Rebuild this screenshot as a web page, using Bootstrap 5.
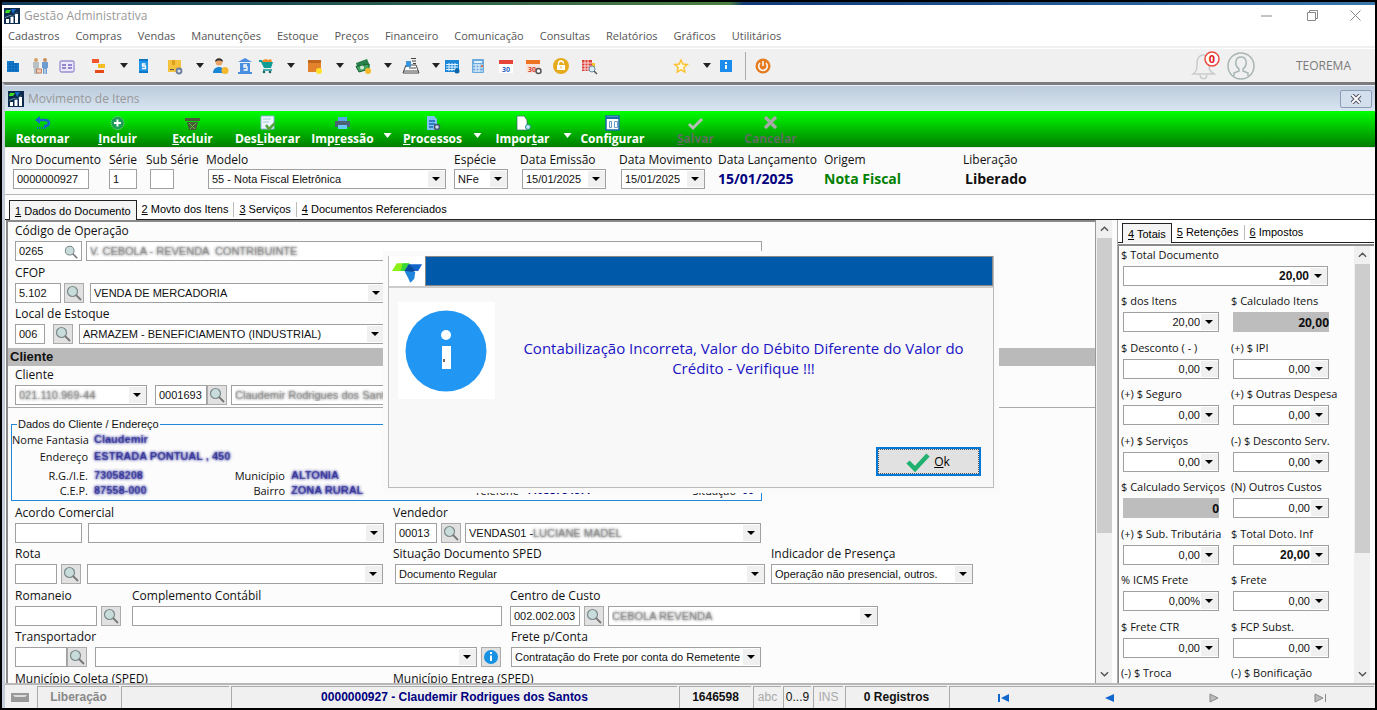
<!DOCTYPE html>
<html lang="pt-BR">
<head>
<meta charset="utf-8">
<meta name="viewport" content="width=device-width, initial-scale=1">
<title>Gestão Administrativa</title>
<link href="https://cdn.jsdelivr.net/npm/bootstrap@5.3.0/dist/css/bootstrap.min.css" rel="stylesheet">
<style>
:root{--ui:"Open Sans","Noto Sans",sans-serif;--fx:"Liberation Sans",Arial,sans-serif}
body{font:12px/16px var(--ui);color:#111;background:#000;padding:2px;height:100vh;overflow:hidden;display:flex;flex-direction:column}
button{font:inherit;border:0;background:none;padding:0}
svg{display:block}
.wall{height:3px;background:linear-gradient(90deg,#123a5c 0,#1f4f55 20%,#4c8040 53%,#123a78 54%,#3a78ac 100%)}
.titlebar{height:21px;background:#fff;color:#999}
.wbtn{width:46px;display:flex;justify-content:center;align-items:center}
.wbtn:last-child{width:40px}
.menubar{height:22px;background:#fff;border-bottom:2px solid #f0f0f0;padding:0 6px;gap:16px;font-size:11px}
.menubar a{color:#555;text-decoration:none}
.tools{height:34px;background:#f0f0f0;border-top:1px solid #fff}
.toolgrid{display:grid;grid-template-columns:27px 27px 32px 30px 14px 31px 31px 15px 25px 21px 30px 18px 31px 18px 30px 18px 30px 11px 26px 28px 27px 28px 28px 92px 31px 14px 28px 9px 18px;align-items:center;padding-left:2px}
.toolgrid svg{width:18px;height:18px}
.caret{width:8px;height:5px;background:#222;clip-path:polygon(0 0,100% 0,50% 100%)}
.caret.light{background:#fff}
.vsep{width:1px;height:28px;background:#aaa}
.teo{margin-left:41px;color:#7a7a7a}
.child{flex:1;min-height:0;display:flex;flex-direction:column;border-top:3px solid #7c7c7c;border-left:3px solid #c3ccd8;background:#fcfcfc}
.childbar{height:26px;background:linear-gradient(#bccbdb,#d8e5f2);color:#999;border-top:1px solid #eef;padding:0 3px 0 3px}
.xbtn{width:32px;height:18px;border:1px solid #8c9bb8;border-radius:2px;background:#d3dfec}
.green{height:36px;background:linear-gradient(#00ff00,#007c00);color:#fff;font-weight:700}
.green button:not(.drop){width:75px;color:#fff;font-weight:700;display:flex;flex-direction:column;align-items:center;padding-top:4px}
.green button svg{width:17px;height:16px}
.green .drop{width:15px;display:flex;justify-content:center;padding-top:22px}
.green button.off:not(.drop){color:#5d6f5d}
.head{height:48px;border-top:1px solid #e8e8e8;border-bottom:1px solid #b8b8b8;padding:2px 0 0 6px;background:#fbfbfb}
.head label,.head .cap{height:19px;line-height:19px;display:block;white-space:nowrap}
.head .big{font-weight:700;font-size:14px;line-height:20px;white-space:nowrap}
.navy{color:#000080}.grass{color:#008000}
.fx,.sx{height:20px;border:1px solid #a0a0a0;border-radius:0;background:#fff;font:11px/16px var(--fx);color:#111;padding:0 3px;min-width:0;flex:none;outline-offset:0}
.sx{appearance:none;background:#fff url("data:image/svg+xml,%3Csvg xmlns='http://www.w3.org/2000/svg' width='17' height='16'%3E%3Cpath fill='%23f0f0f0' d='M0 0h17v16H0z'/%3E%3Cpath d='M4 6h8l-4 4z'/%3E%3C/svg%3E") no-repeat right 0 center;padding-right:18px}
.num{text-align:right}
.num.strong{font-weight:700;font-size:12px}
.calc{background:#bdbdbd;border:0;text-align:right;font:700 12px/16px var(--ui);padding:0}
.veil{color:#7776;text-shadow:0 0 3px #444}
.tabs{background:#fff;border-bottom:1px solid #222;font:11px/18px var(--fx);height:21px;align-items:end}
.tabs button{height:20px;padding:0 5px;white-space:nowrap;line-height:20px}
.tabs button.on{border:1px solid #222;border-bottom:0;background:#f4f4f4;height:20px;margin-bottom:-1px;line-height:20px}
.tabs button+button:not(.on)+button{border-left:1px solid #bbb;height:15px;line-height:15px;margin-bottom:2px}
.work{flex:1;min-height:0;display:flex;overflow:hidden}
.formpane{flex:1;min-width:0;border-top:2px solid #8a8a8a;border-left:2px solid #8a8a8a;border-right:1px solid #999;overflow:hidden;margin:0 0 0 1px}
.frow{height:41px;display:flex;padding-left:7px}
.frow.tall{height:42px}
.frow label{display:block;height:19px;line-height:18px;white-space:nowrap}
.frow .grp{flex:none}
.lens{width:20px;height:20px;border:1px solid #ababab;background:#e1e1e1;display:flex;align-items:center;justify-content:center;flex:none}
.section{height:18px;background:#bababa;font:700 13px/17px var(--fx);margin-top:1px;padding-left:2px}
.rule{border-top:1px solid #aaa;margin:0}
fieldset.client{border:1px solid #2487d6;width:751px;height:77px;margin:16px 0 3px 3px;position:relative;padding-top:7px;font:11px/15px var(--ui)}
fieldset.client legend{position:absolute;top:-9px;left:5px;width:auto;background:#fcfcfc;font:11px/17px var(--fx);margin:0;float:none;padding:0 1px}
.cgrid{display:grid;grid-template-columns:76px 132px 53px 176px 46px 158px 47px 1fr;column-gap:6px;grid-template-rows:17px 19px 15px 15px;white-space:nowrap}
.cgrid dt{font-weight:400;text-align:right}
.cgrid dd{margin:0;color:#000080;font:700 11px/15px var(--fx)}
.cgrid .veil{color:#00008077;text-shadow:0 0 3px #000080}
.veiled-over{left:68px;top:2px;font:11px/16px var(--fx)}
.sbar{width:16px;background:#f0f0f0;display:flex;flex-direction:column;align-items:center;flex:none}
.sbar .thumb{width:15px;height:69%;background:#cdcdcd}
.sbar .thumb.short{height:72%}
.sbar button{height:18px;width:16px;display:flex;align-items:center;justify-content:center}
.side{width:257px;flex:none;border-left:1px solid #aaa;display:flex;flex-direction:column;background:#fff;margin:0 1px 0 5px}
.side .tabs{margin-top:2px}
.side .inner{flex:1;min-height:0;display:flex;border-top:2px solid #8a8a8a;border-left:1px solid #8a8a8a;margin-top:1px;background:#fcfcfc}
.trow{display:grid;grid-template-columns:110px 110px;height:46px}
.trow:nth-child(even){height:47px}
.trow>div{overflow:hidden;padding-left:3px}
.trow label{display:block;white-space:nowrap;height:20px;line-height:18px;margin-left:-1px;font-size:11px}
.trow input{width:96px;margin-left:1px;display:block}
.trow .wide{width:205px}
.status{height:25px;background:#f0f0f0;border-top:2px solid #b8b8b8;display:flex;padding:1px 1px 0 0;gap:2px;font:700 12px/21px var(--fx)}
.status>div,.status>nav{border-left:1px solid #aaa;border-top:1px solid #aaa;text-align:center;white-space:nowrap;overflow:hidden;flex:none}
.status>.who{flex:1 1 22px;color:#000080}
.status>nav{flex:1 1 0}
.status .mute{color:#888}
.thin{font-weight:400}
.faint{color:#aaa}
.w28{width:28px}.w30{width:30px}.w24{width:24px}.w42{width:42px}.w46{width:46px}.w52{width:52px}.w54{width:54px}.w67{width:67px}.w70{width:70px}.w76{width:76px}.w82{width:82px}.w84{width:84px}.w102{width:102px}.w108{width:108px}.w132{width:132px}.w202{width:202px}.w238{width:238px}.w250{width:250px}.w270{width:270px}.w296{width:296px}.w306{width:306px}.w370{width:370px}.w382{width:382px}.w530{width:530px}.w676{width:676px}
.w37{width:37px}.w60{width:60px}.w66{width:66px}.w72{width:72px}.w98{width:98px}.w99{width:99px}.w106{width:106px}.w117{width:117px}.w139{width:139px}.w248{width:248px}.w378{width:378px}.w496{width:496px}
.s2{margin-left:2px}.s3{margin-left:3px}.s4{margin-left:4px}.s6{margin-left:6px}.s8{margin-left:8px}
.dlg{position:absolute;left:50%;top:251px;width:616px;margin-left:-306px;border:5px solid #fafafa;background:#f8f8f8;z-index:5}
.dlg .frame{border:1px solid #bbb;border-top:0;height:232px;display:flex;flex-direction:column}
.dlgtitle{height:32px;border-bottom:2px solid #ccc;background:#fff}
.dlgtitle .blue{background:#005aa9;border:1px solid #8a8a8a}
.dlgicon{width:97px;height:97px;background:#fff;margin:14px 0 0 9px}
.dlgmsg{color:#1a14c4;font-size:15px;line-height:20px;font-weight:500;text-align:center;padding:50px 16px 0}
.okbtn{width:105px;height:29px;background:#e1e1e1;border:2px solid #0078d7;outline:1px dotted #555;outline-offset:-3px;font:12px/16px var(--ui);margin:0 12px 11px auto}
</style>
</head>
<body>
<svg width="0" height="0" class="position-absolute" aria-hidden="true">
<symbol id="lens" viewBox="0 0 16 16"><circle cx="6.500" cy="6.500" r="5" fill="#c9dcdc" stroke="#7d8a8a" stroke-width="1.200"/><path d="M10 10l5 5" stroke="#777" stroke-width="1.800"/></symbol>
<symbol id="logo" viewBox="0 0 16 16"><path fill="#0d2c4d" d="M0 0h16v16H0z"/><path fill="#3ddc25" d="M2 2h5L5 5H1z"/><path fill="#1768c9" d="M7 1h5l-3 5z"/><path fill="#fff" d="M2 11h3v4H2zM6.500 9h3v6h-3zM11 6h3v9h-3z"/><path d="M1 9.500l5-2 3 1 4-4" stroke="#7fa3c4" fill="none" stroke-width=".8"/></symbol>
<symbol id="up" viewBox="0 0 10 6"><path d="M1 5l4-4 4 4" fill="none" stroke="#555" stroke-width="1.600"/></symbol>
<symbol id="down" viewBox="0 0 10 6"><path d="M1 1l4 4 4-4" fill="none" stroke="#555" stroke-width="1.600"/></symbol>
</svg>
<div class="wall"></div>
<header>
<div class="titlebar d-flex align-items-stretch">
<div class="d-flex align-items-center flex-grow-1"><svg class="s2 me-1" width="16" height="16"><use href="#logo"/></svg><span>Gestão Administrativa</span></div>
<button class="wbtn" aria-label="Minimizar"><svg width="11" height="11"><path d="M0 6h11" stroke="#888"/></svg></button>
<button class="wbtn" aria-label="Restaurar"><svg width="11" height="11" fill="none" stroke="#888"><path d="M.5 2.500h8v8h-8zM2.500 2.500v-2h8v8h-2"/></svg></button>
<button class="wbtn" aria-label="Fechar"><svg width="11" height="11"><path d="M.5.500l10 10M10.500.500l-10 10" stroke="#888"/></svg></button>
</div>
<nav class="menubar d-flex align-items-center"><a href="#">Cadastros</a><a href="#">Compras</a><a href="#">Vendas</a><a href="#">Manutenções</a><a href="#">Estoque</a><a href="#">Preços</a><a href="#">Financeiro</a><a href="#">Comunicação</a><a href="#">Consultas</a><a href="#">Relatórios</a><a href="#">Gráficos</a><a href="#">Utilitários</a></nav>
<div class="tools d-flex align-items-center">
<div class="toolgrid">
<button aria-label="Empresa"><svg viewBox="0 0 18 18"><path fill="#1583d8" d="M3 4h7v2h5v9H3z"/><path stroke="#0a5ba5" d="M3 7h12M3 10h12M3 13h12M6 4v11M9 4v11M12 6v9" stroke-width=".8"/></svg></button>
<button aria-label="Parceiros"><svg viewBox="0 0 18 18"><circle cx="5" cy="3" r="2" fill="#d9a066"/><circle cx="14" cy="3" r="2" fill="#c4915c"/><path fill="#b8c2c6" d="M2 5h6v6H7v6H3v-6H2z"/><path fill="#6d9dd0" d="M11 5h6v6h-1v6h-1.500v-5h-1v5H12v-6h-1z"/><path fill="#f0d0b8" stroke="#c07c5c" d="M5.500 12h5v4h-5z"/></svg></button>
<button aria-label="Ficha"><svg viewBox="0 0 18 18"><rect x="2" y="4" width="14" height="11" rx="1.500" fill="#ece8fb" stroke="#9b8fd0" stroke-width="1.300"/><path d="M4 8h4M4 11h4M10 8h4M10 11h4" stroke="#7766bb" stroke-width="1.500"/></svg></button>
<button aria-label="Estrutura"><svg viewBox="0 0 18 18"><path fill="#f2552c" d="M2 2h7v4H2z"/><path fill="#f5bd25" d="M8 7h7v4H8z"/><path fill="#e64a19" d="M5 13h9v3H5z"/></svg></button>
<button class="caret" aria-label="Mais"></button>
<button aria-label="Financeiro"><svg viewBox="0 0 18 18"><path fill="#2196e8" d="M5 2h9v14H5z"/><path fill="#0b77c6" d="M5 2h9v2H5zM5 14h9v2H5z"/><path d="M11.500 7h-3v2h3v2.500h-3.500" fill="none" stroke="#fff" stroke-width="1.300"/></svg></button>
<button aria-label="Produto"><svg viewBox="0 0 18 18"><path fill="#f4c23c" d="M3 3h13v12H3z"/><path fill="#dfa01c" d="M7 3h3v5H7z"/><path fill="#555" d="M5 12h4v1H5z"/><circle cx="14" cy="14" r="2.500" fill="#dbe3ee" stroke="#6b7f9c" stroke-width="1.800"/></svg></button>
<button class="caret" aria-label="Mais"></button>
<button aria-label="Cliente"><svg viewBox="0 0 18 18"><circle cx="8" cy="5" r="3.500" fill="#e8a56a"/><path fill="#333" d="M4 5c0-5 8-5 8 0-2-2-6-2-8 0z"/><path fill="#1c86d6" d="M2 16c0-8 12-8 12 0z"/><circle cx="14" cy="13.500" r="3.500" fill="#f5b82d"/></svg></button>
<button aria-label="Banco"><svg viewBox="0 0 18 18"><path fill="#4a8ee0" d="M9 1l7 4H2zM4 6h10v10H4zM2 15h14v2H2z"/><path d="M11 8H8v2h3v3H7.500" fill="none" stroke="#fff" stroke-width="1.300"/></svg></button>
<button aria-label="Compras"><svg viewBox="0 0 18 18"><path fill="#f48a25" d="M6 3l3-1 2 1 3-1 1 3H5z"/><path fill="#0f9d94" d="M2 3h3l1 2h10l-2 6H7L4 5H2z"/><path d="M6 13h9" stroke="#0f9d94" stroke-width="1.500"/><circle cx="7" cy="15" r="1.300" fill="#23606a"/><circle cx="13" cy="15" r="1.300" fill="#23606a"/></svg></button>
<button class="caret" aria-label="Mais"></button>
<button aria-label="Estoque"><svg viewBox="0 0 18 18"><path fill="#e2832b" d="M3 3h13v12H3z"/><path fill="#c0651a" d="M3 3h13v3H3z"/><circle cx="14" cy="14" r="3" fill="#ffe029"/></svg></button>
<button class="caret" aria-label="Mais"></button>
<button aria-label="Pagamentos"><svg viewBox="0 0 18 18"><path fill="#268049" d="M2 6l11-4 3 7L4 13z"/><path fill="#43a564" stroke="#17602f" d="M2 9.500l13-2.500v5L5 15z"/><circle cx="8" cy="10.500" r="2" fill="#cfe8d6"/><circle cx="14" cy="14" r="3" fill="#f3b928"/></svg></button>
<button class="caret" aria-label="Mais"></button>
<button aria-label="Caixa"><svg viewBox="0 0 18 18"><path fill="#fff" stroke="#444" d="M4 8h10l3 8H1z"/><path fill="#3b95dc" d="M4 4h5v6H4z"/><path d="M9 1.500h5M10 4h4M11 6.500h3M2 14h14M7 11h7" stroke="#444" stroke-width="1.200"/></svg></button>
<button class="caret" aria-label="Mais"></button>
<button aria-label="Agenda"><svg viewBox="0 0 18 18"><path fill="#1b87d8" d="M2 3h14v12H2z"/><path stroke="#e0f1ff" d="M3 7.500h12M3 10h12M3 12.500h12M6 6v8M9 6v8M12 6v8"/><circle cx="14" cy="14" r="2.500" fill="#0d63a8"/></svg></button>
<button aria-label="Calculadora"><svg viewBox="0 0 18 18"><rect x="3" y="2" width="12" height="14" rx="1" fill="#6ba9dc"/><path fill="#dff0ff" d="M5 4h8v2H5z"/><path stroke="#e9f5ff" d="M4 8h10M4 11h10M4 14h10M7 7v8M10 7v8"/><path fill="#d57a4e" d="M12 8h2v2h-2z"/></svg></button>
<button aria-label="Calendário"><svg viewBox="0 0 18 18"><path fill="#fff" d="M2 3h14v13H2z"/><path fill="#e5443a" d="M2 3h14v4H2z"/><text x="9" y="14.500" font-size="7" font-weight="700" text-anchor="middle" fill="#2a5fc4">30</text></svg></button>
<button aria-label="Programação"><svg viewBox="0 0 18 18"><path fill="#f8e4d8" d="M2 3h14v13H2z"/><path fill="#ee7322" d="M2 3h14v4H2z"/><text x="8" y="14.500" font-size="7" font-weight="700" text-anchor="middle" fill="#d9402f">30</text><circle cx="14.500" cy="14" r="2.500" fill="#fff" stroke="#555" stroke-width="1.500"/></svg></button>
<button aria-label="Bloqueio"><svg viewBox="0 0 18 18"><circle cx="9" cy="9" r="8" fill="#e6ab1d"/><path fill="#fff" d="M5 8h8v5H5z"/><path d="M6.500 8V6.500a2.500 2.500 0 015 0" fill="none" stroke="#fff" stroke-width="1.300"/><path d="M9 9.500v2" stroke="#e6ab1d"/></svg></button>
<button aria-label="Pesquisa"><svg viewBox="0 0 18 18"><path fill="#db3d37" d="M2 3h10v11H2z"/><path stroke="#fff" d="M2 6h10M2 9h10M2 12h10M5 3v11M8 3v11" stroke-width=".8"/><path fill="#f4bf2c" d="M12 6h3v5h-3z"/><circle cx="12" cy="12" r="3" fill="#d9ecf8" stroke="#6689a2"/><path d="M14 14l3 3" stroke="#555" stroke-width="1.500"/></svg></button>
<button aria-label="Favoritos"><svg viewBox="0 0 18 18"><path d="M9 3l1.800 4 4.500.5-3.400 3 1 4.500L9 12.800 5.100 15l1-4.500-3.400-3L7.200 7z" fill="#fff8dc" stroke="#fbc02d" stroke-width="1.400"/></svg></button>
<button class="caret" aria-label="Mais"></button>
<button aria-label="Informação"><svg viewBox="0 0 18 18"><path fill="#1c8cec" d="M3 3h12v12H3z"/><path fill="#fff" d="M8 5h2v2H8zM8 8h2v4H8z"/></svg></button>
<span class="vsep"></span>
<button aria-label="Sair"><svg viewBox="0 0 18 18"><circle cx="9" cy="9" r="7.500" fill="#e57c22"/><path d="M6 6a4.300 4.300 0 106 0M9 4v5" fill="none" stroke="#fff" stroke-width="1.500"/></svg></button>
</div>
<div class="ms-auto d-flex align-items-center pe-4">
<button class="position-relative" aria-label="Notificações"><svg width="32" height="32" viewBox="0 0 32 32" fill="none" stroke="#c9cccc" stroke-width="1.500"><path d="M4 24c4-3 4-5 4-11 0-5 3-8 6-8s6 3 6 8c0 6 0 8 5 11z"/><path d="M11 25c1 5 6 5 7 0"/></svg>
<svg class="position-absolute top-0 end-0" width="18" height="18"><circle cx="9" cy="9" r="7" fill="#fff" stroke="#ea4b43" stroke-width="1.500"/><text x="9" y="13" font-size="11" font-weight="700" text-anchor="middle" fill="#e01818">0</text></svg></button>
<button class="s6" aria-label="Usuário"><svg width="28" height="28" viewBox="0 0 28 28" fill="none" stroke="#a9b5b5" stroke-width="1.500"><circle cx="14" cy="14" r="13"/><path d="M7 24v-3l5-2v-2c-5-4-4-12 2-12s7 8 2 12v2l5 2v3"/></svg></button>
<span class="teo">TEOREMA</span>
</div>
</div>
</header>
<main class="child">
<div class="childbar d-flex align-items-center"><svg class="me-1" width="16" height="16"><use href="#logo"/></svg><span class="flex-grow-1">Movimento de Itens</span><button class="xbtn d-flex align-items-center justify-content-center" aria-label="Fechar janela"><svg width="12" height="10"><path d="M2 1l8 8M10 1l-8 8" stroke="#556" stroke-width="4"/><path d="M2 1l8 8M10 1l-8 8" stroke="#fff" stroke-width="1.800"/></svg></button></div>
<div class="green d-flex">
<button><svg viewBox="0 0 17 16"><path d="M4 5h7q4 0 4 3t-4 3h-1" fill="none" stroke="#1565c8" stroke-width="2.500"/><path fill="#1565c8" d="M1 5l5-4v8z"/><path d="M3 13h9" stroke="#1565c8" stroke-width="2" stroke-dasharray="1 1"/></svg>Retornar</button>
<button><svg viewBox="0 0 17 16"><circle cx="8.500" cy="8" r="6.500" fill="#1b9d55" stroke="#8fdc9f" stroke-dasharray="1 1"/><path d="M8.500 4.500v7M5 8h7" stroke="#fff" stroke-width="2"/></svg><span><u>I</u>ncluir</span></button>
<button><svg viewBox="0 0 17 16"><path fill="#4a5a3a" d="M1 3h15v3H1zM3 7h11l-2 8H5z"/><path d="M5 8l6 6M12 8l-6 6" stroke="#59c33b"/></svg><span><u>E</u>xcluir</span></button>
<button><svg viewBox="0 0 17 16"><path fill="#eef4ff" stroke="#8fb4dd" d="M2 1h13v13H2z"/><path d="M4 4h8M4 7h6" stroke="#9cc"/><path d="M7 10l3 4 6-6" fill="none" stroke="#53a53d" stroke-width="2.500"/></svg><span>Des<u>L</u>iberar</span></button>
<button><svg viewBox="0 0 17 16"><path fill="#57a9ea" d="M4 2h9v4H4z"/><path fill="#4b6275" d="M1 6h15v6H1z"/><path fill="#68c9f5" d="M4 10h9v4H4z"/></svg><span>Imp<u>r</u>essão</span></button>
<button class="drop" aria-label="Opções de impressão"><span class="caret light"></span></button>
<button><svg viewBox="0 0 17 16"><path fill="#7fc1f5" d="M3 1h7l3 3v11H3z"/><path d="M5 6h6M5 9h6M5 12h4" stroke="#1a67b4" stroke-width="1.300"/><circle cx="13" cy="12" r="2.500" fill="#cde" stroke="#456" stroke-width="1.500"/></svg><span><u>P</u>rocessos</span></button>
<button class="drop" aria-label="Opções de processos"><span class="caret light"></span></button>
<button><svg viewBox="0 0 17 16"><path fill="#fff" stroke="#467" stroke-width=".7" d="M3 1h7l3 4v10H3z"/><circle cx="14" cy="12" r="2.500" fill="#bfe6f8" stroke="#2b8b8b"/></svg><span>Impor<u>t</u>ar</span></button>
<button class="drop" aria-label="Opções de importação"><span class="caret light"></span></button>
<button><svg viewBox="0 0 17 16"><path fill="#fff" stroke="#186aa8" stroke-width="1.500" d="M2 1h13v14H2z"/><path d="M2 3h13" stroke="#186aa8" stroke-width="2"/><path d="M5.500 6.500h2v6h-2zM10.500 6.500h3v6h-3z" fill="none" stroke="#6a9cc8"/></svg><span>Confi<u>g</u>urar</span></button>
<button class="off ms-2" disabled><svg viewBox="0 0 17 16"><path d="M2 9l4 4 9-9" fill="none" stroke="#b5bdb5" stroke-width="3"/></svg><span><u>S</u>alvar</span></button>
<button class="off" disabled><svg viewBox="0 0 17 16"><path d="M3 2l11 11M14 2L3 13" stroke="#a4aaa4" stroke-width="3.500"/></svg><span>Cancelar</span></button>
</div>
<form class="head d-flex align-items-start">
<div class="w98"><label for="nro">Nro Documento</label><input id="nro" class="fx w76 s2" value="0000000927"></div>
<div class="w37"><label for="serie">Série</label><input id="serie" class="fx w28" value="1"></div>
<div class="w60"><label for="sub">Sub Série</label><input id="sub" class="fx w24 s4"></div>
<div class="w248"><label for="modelo">Modelo</label><select id="modelo" class="sx w238 s2"><option>55 - Nota Fiscal Eletrônica</option></select></div>
<div class="w66"><label for="esp">Espécie</label><select id="esp" class="sx w54"><option>NFe</option></select></div>
<div class="w99"><label for="emi">Data Emissão</label><input id="emi" class="sx w84 s2" value="15/01/2025"></div>
<div class="w99"><label for="mov">Data Movimento</label><input id="mov" class="sx w84 s2" value="15/01/2025"></div>
<div class="w106"><span class="cap">Data Lançamento</span><output class="big navy">15/01/2025</output></div>
<div class="w139"><span class="cap">Origem</span><output class="big grass">Nota Fiscal</output></div>
<div><span class="cap">Liberação</span><output class="big s2">Liberado</output></div>
</form>
<div class="tabs d-flex ps-1 mt-1" role="tablist"><button class="on" role="tab"><u>1</u> Dados do Documento</button><button role="tab"><u>2</u> Movto dos Itens</button><button role="tab"><u>3</u> Serviços</button><button role="tab"><u>4</u> Documentos Referenciados</button></div>
<div class="work">
<form class="formpane">
<div class="frow tall"><div class="grp"><label for="cop">Código de Operação</label><div class="d-flex"><div class="position-relative"><input id="cop" class="fx w67 d-block" value="0265"><svg class="position-absolute top-0 end-0 mt-1 me-1" width="14" height="14"><use href="#lens"/></svg></div><input class="fx w676 s4 veil" aria-label="Operação" value="V. CEBOLA - REVENDA  CONTRIBUINTE"></div></div></div>
<div class="frow"><div class="grp"><label for="cfop">CFOP</label><div class="d-flex"><input id="cfop" class="fx w46" value="5.102"><button type="button" class="lens s3" aria-label="Buscar CFOP"><svg width="16" height="16"><use href="#lens"/></svg></button><select class="sx w296 s6" aria-label="Descrição CFOP"><option>VENDA DE MERCADORIA</option></select></div></div></div>
<div class="frow tall"><div class="grp"><label for="loc">Local de Estoque</label><div class="d-flex"><input id="loc" class="fx w30" value="006"><button type="button" class="lens s8" aria-label="Buscar local"><svg width="16" height="16"><use href="#lens"/></svg></button><select class="sx w306 s6" aria-label="Descrição do local"><option>ARMAZEM - BENEFICIAMENTO (INDUSTRIAL)</option></select></div></div></div>
<div class="section">Cliente</div>
<div class="frow"><div class="grp"><label for="cli">Cliente</label><div class="d-flex"><select id="cli" class="sx w132 veil"><option>021.110.969-44</option></select><input class="fx w52 s8" aria-label="Código do cliente" value="0001693"><button type="button" class="lens" aria-label="Buscar cliente"><svg width="16" height="16"><use href="#lens"/></svg></button><input class="fx w530 s4 veil" aria-label="Nome do cliente" value="Claudemir Rodrigues dos Santos"></div></div></div>
<hr class="rule opacity-100">
<fieldset class="client"><legend>Dados do Cliente / Endereço</legend>
<dl class="cgrid m-0"><dt>Nome Fantasia</dt><dd class="veil">Claudemir</dd><dt></dt><dd></dd><dt></dt><dd></dd><dt></dt><dd></dd>
<dt>Endereço</dt><dd class="veil">ESTRADA PONTUAL , 450</dd><dt></dt><dd></dd><dt></dt><dd></dd><dt></dt><dd></dd>
<dt>R.G./I.E.</dt><dd class="veil">73058208</dd><dt>Município</dt><dd class="veil">ALTONIA</dd><dt></dt><dd></dd><dt></dt><dd></dd>
<dt>C.E.P.</dt><dd class="veil">87558-000</dd><dt>Bairro</dt><dd class="veil">ZONA RURAL</dd><dt>Telefone</dt><dd>44988734577</dd><dt>Situação</dt><dd>00</dd></dl></fieldset>
<div class="frow"><div class="grp w378"><label for="aco">Acordo Comercial</label><div class="d-flex"><input id="aco" class="fx w67"><select class="sx w296 s6" aria-label="Descrição do acordo"></select></div></div>
<div class="grp"><label for="ven">Vendedor</label><div class="d-flex"><input id="ven" class="fx w42 s2" value="00013"><button type="button" class="lens s4" aria-label="Buscar vendedor"><svg width="16" height="16"><use href="#lens"/></svg></button><div class="position-relative s4"><select class="sx d-block w296" aria-label="Nome do vendedor"><option>VENDAS01 -</option></select><span class="veil veiled-over position-absolute">LUCIANE MADEL</span></div></div></div></div>
<div class="frow tall"><div class="grp w378"><label for="rota">Rota</label><div class="d-flex"><input id="rota" class="fx w42"><button type="button" class="lens s4" aria-label="Buscar rota"><svg width="16" height="16"><use href="#lens"/></svg></button><select class="sx w296 s6" aria-label="Descrição da rota"></select></div></div>
<div class="grp w378"><label for="sit">Situação Documento SPED</label><select id="sit" class="sx w370 d-block s2"><option>Documento Regular</option></select></div>
<div class="grp"><label for="ind">Indicador de Presença</label><select id="ind" class="sx w202 d-block"><option>Operação não presencial, outros.</option></select></div></div>
<div class="frow"><div class="grp w117"><label for="rom">Romaneio</label><div class="d-flex"><input id="rom" class="fx w82"><button type="button" class="lens s4" aria-label="Buscar romaneio"><svg width="16" height="16"><use href="#lens"/></svg></button></div></div>
<div class="grp w378"><label for="com">Complemento Contábil</label><input id="com" class="fx w370 d-block"></div>
<div class="grp"><label for="cc">Centro de Custo</label><div class="d-flex"><input id="cc" class="fx w70" value="002.002.003"><button type="button" class="lens s4" aria-label="Buscar centro"><svg width="16" height="16"><use href="#lens"/></svg></button><select class="sx w270 s4 veil" aria-label="Descrição do centro"><option>CEBOLA REVENDA</option></select></div></div></div>
<div class="frow tall"><div class="grp w496"><label for="tra">Transportador</label><div class="d-flex"><input id="tra" class="fx w52"><button type="button" class="lens" aria-label="Buscar transportador"><svg width="16" height="16"><use href="#lens"/></svg></button><select class="sx w382 s8" aria-label="Nome do transportador"></select><button type="button" class="lens s4" aria-label="Informações"><svg width="16" height="16"><circle cx="8" cy="8" r="7" fill="#1791e2"/><path fill="#fff" d="M7 3h2v2H7zM7 6.500h2V12H7z"/></svg></button></div></div>
<div class="grp"><label for="fre">Frete p/Conta</label><select id="fre" class="sx w250 d-block"><option>Contratação do Frete por conta do Remetente (</option></select></div></div>
<div class="frow"><div class="grp w378"><label for="mc">Município Coleta (SPED)</label><input id="mc" class="fx w370"></div><div class="grp"><label for="me">Município Entrega (SPED)</label><input id="me" class="fx w370"></div></div>
</form>
<div class="sbar"><button aria-label="Subir"><svg width="9" height="6"><use href="#up"/></svg></button><div class="flex-grow-1"><div class="thumb"></div></div><button aria-label="Descer"><svg width="9" height="6"><use href="#down"/></svg></button></div>
<aside class="side">
<div class="tabs d-flex ps-1" role="tablist"><button class="on" role="tab"><u>4</u> Totais</button><button role="tab"><u>5</u> Retenções</button><button role="tab"><u>6</u> Impostos</button></div>
<div class="inner"><form class="flex-grow-1 overflow-hidden">
<div class="trow"><div class="d-block" style="grid-column:span 2"><label for="t1">$ Total Documento</label><input id="t1" class="sx num strong wide" value="20,00"></div></div>
<div class="trow"><div><label for="t2">$ dos Itens</label><input id="t2" class="sx num" value="20,00"></div><div><label for="t3">$ Calculado Itens</label><input id="t3" class="fx calc" value="20,00" readonly></div></div>
<div class="trow"><div><label for="t4">$ Desconto ( - )</label><input id="t4" class="sx num" value="0,00"></div><div><label for="t5">(+) $ IPI</label><input id="t5" class="sx num" value="0,00"></div></div>
<div class="trow"><div><label for="t6">(+) $ Seguro</label><input id="t6" class="sx num" value="0,00"></div><div><label for="t7">(+) $ Outras Despesa</label><input id="t7" class="sx num" value="0,00"></div></div>
<div class="trow"><div><label for="t8">(+) $ Serviços</label><input id="t8" class="sx num" value="0,00"></div><div><label for="t9">(-) $ Desconto Serv.</label><input id="t9" class="sx num" value="0,00"></div></div>
<div class="trow"><div><label for="t10">$ Calculado Serviços</label><input id="t10" class="fx calc" value="0" readonly></div><div><label for="t11">(N) Outros Custos</label><input id="t11" class="sx num" value="0,00"></div></div>
<div class="trow"><div><label for="t12">(+) $ Sub. Tributária</label><input id="t12" class="sx num" value="0,00"></div><div><label for="t13">$ Total Doto. Inf</label><input id="t13" class="sx num strong" value="20,00"></div></div>
<div class="trow"><div><label for="t14">% ICMS Frete</label><input id="t14" class="sx num" value="0,00%"></div><div><label for="t15">$ Frete</label><input id="t15" class="sx num" value="0,00"></div></div>
<div class="trow"><div><label for="t16">$ Frete CTR</label><input id="t16" class="sx num" value="0,00"></div><div><label for="t17">$ FCP Subst.</label><input id="t17" class="sx num" value="0,00"></div></div>
<div class="trow"><div><label for="t18">(-) $ Troca</label><input id="t18" class="sx num" value=""></div><div><label for="t19">(-) $ Bonificação</label><input id="t19" class="sx num" value=""></div></div>
</form>
<div class="sbar me-1"><button aria-label="Subir"><svg width="9" height="6"><use href="#up"/></svg></button><div class="flex-grow-1"><div class="thumb short"></div></div><button aria-label="Descer"><svg width="9" height="6"><use href="#down"/></svg></button></div></div>
</aside>
</div>
<footer class="status">
<div class="w30 border-0 d-flex align-items-center justify-content-center"><svg width="18" height="9"><path fill="#999" d="M0 0h18v9H0z"/><path fill="#ddd" d="M2 2h14l-2 2H4z"/></svg></div>
<div class="w82 mute">Liberação</div><div class="w108"></div>
<div class="who">0000000927 - Claudemir Rodrigues dos Santos</div>
<div class="w72">1646598</div><div class="w28 thin faint">abc</div><div class="w28 thin">0...9</div><div class="w30 thin faint">INS</div><div class="w102">0 Registros</div>
<nav class="d-flex justify-content-around align-items-center"><button aria-label="Primeiro"><svg width="13" height="10"><path fill="#1267cf" d="M1 1h2v8H1zM12 1v8L4 5z"/></svg></button><button aria-label="Anterior"><svg width="10" height="10"><path fill="#1267cf" d="M9 1v8L0 5z"/></svg></button><button aria-label="Próximo"><svg width="10" height="10"><path fill="#bbb" stroke="#888" d="M1 1l8 4-8 4z"/></svg></button><button aria-label="Último"><svg width="13" height="10"><path fill="#bbb" stroke="#888" d="M1 1l8 4-8 4zM11.500 1v8"/></svg></button></nav>
</footer>
</main>
<section class="dlg" role="dialog" aria-label="Aviso">
<div class="frame">
<div class="dlgtitle d-flex"><svg width="36" height="30" viewBox="0 0 37 30"><path fill="#8df018" d="M8 7h13l-4 8H3z"/><path fill="#38d838" d="M14 7h7l-4 8h-5z"/><path fill="#1264c8" d="M20 8h14l-4 7H16z"/><path fill="#0a4a9c" d="M21 8l6 7-5 2-6-2z"/><path fill="#1f86dc" d="M16 15l11 1-1 7-4 4z"/></svg><div class="blue flex-grow-1"></div></div>
<div class="d-flex flex-grow-1"><div class="dlgicon d-flex align-items-center justify-content-center flex-shrink-0"><svg width="82" height="82"><circle cx="41" cy="41" r="40.500" fill="#2196f3"/><circle cx="41" cy="25" r="5" fill="#fff"/><path fill="#fff" d="M37 36h9v23h-9z"/><path fill="#765" d="M38 49h2v3h-2z"/></svg></div>
<p class="dlgmsg m-0 flex-grow-1">Contabilização Incorreta, Valor do Débito Diferente do Valor do<br>Crédito - Verifique !!!</p></div>
<button class="okbtn d-flex align-items-center justify-content-center"><svg class="me-1" width="24" height="20"><path d="M2 10l7 7L22 3" fill="none" stroke="#20b070" stroke-width="4.500"/></svg><span><u>O</u>k</span></button>
</div>
</section>
<script src="https://cdn.jsdelivr.net/npm/bootstrap@5.3.0/dist/js/bootstrap.bundle.min.js"></script>
</body>
</html>
